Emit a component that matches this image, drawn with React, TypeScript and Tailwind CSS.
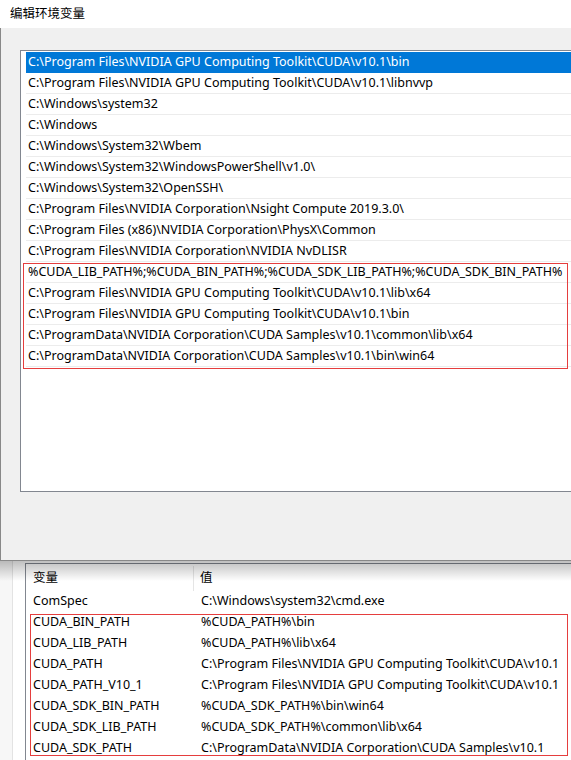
import React from 'react';

const paths: string[] = [
  'C:\\Program Files\\NVIDIA GPU Computing Toolkit\\CUDA\\v10.1\\bin',
  'C:\\Program Files\\NVIDIA GPU Computing Toolkit\\CUDA\\v10.1\\libnvvp',
  'C:\\Windows\\system32',
  'C:\\Windows',
  'C:\\Windows\\System32\\Wbem',
  'C:\\Windows\\System32\\WindowsPowerShell\\v1.0\\',
  'C:\\Windows\\System32\\OpenSSH\\',
  'C:\\Program Files\\NVIDIA Corporation\\Nsight Compute 2019.3.0\\',
  'C:\\Program Files (x86)\\NVIDIA Corporation\\PhysX\\Common',
  'C:\\Program Files\\NVIDIA Corporation\\NVIDIA NvDLISR',
  '%CUDA_LIB_PATH%;%CUDA_BIN_PATH%;%CUDA_SDK_LIB_PATH%;%CUDA_SDK_BIN_PATH%',
  'C:\\Program Files\\NVIDIA GPU Computing Toolkit\\CUDA\\v10.1\\lib\\x64',
  'C:\\Program Files\\NVIDIA GPU Computing Toolkit\\CUDA\\v10.1\\bin',
  'C:\\ProgramData\\NVIDIA Corporation\\CUDA Samples\\v10.1\\common\\lib\\x64',
  'C:\\ProgramData\\NVIDIA Corporation\\CUDA Samples\\v10.1\\bin\\win64',
];

const vars: [string, string][] = [
  ['ComSpec', 'C:\\Windows\\system32\\cmd.exe'],
  ['CUDA_BIN_PATH', '%CUDA_PATH%\\bin'],
  ['CUDA_LIB_PATH', '%CUDA_PATH%\\lib\\x64'],
  ['CUDA_PATH', 'C:\\Program Files\\NVIDIA GPU Computing Toolkit\\CUDA\\v10.1'],
  ['CUDA_PATH_V10_1', 'C:\\Program Files\\NVIDIA GPU Computing Toolkit\\CUDA\\v10.1'],
  ['CUDA_SDK_BIN_PATH', '%CUDA_SDK_PATH%\\bin\\win64'],
  ['CUDA_SDK_LIB_PATH', '%CUDA_SDK_PATH%\\common\\lib\\x64'],
  ['CUDA_SDK_PATH', 'C:\\ProgramData\\NVIDIA Corporation\\CUDA Samples\\v10.1'],
];

export default function App() {
  return (
    <div className="relative w-[571px] h-[760px] overflow-hidden bg-white text-black text-[12.5px] font-['Noto_Sans','Noto_Sans_CJK_SC',sans-serif]">
      {/* edit dialog */}
      <div className="h-[561px] flex flex-col">
        <div className="h-[28px] bg-white pl-[10px] flex items-center leading-none text-[12.5px]">编辑环境变量</div>
        <div className="flex-1 bg-[#f0f0f0] border-l border-b border-[#888888] pt-[22px] pl-[19px]">
          <div className="relative w-[600px] h-[442px] bg-white border border-[#828790] pt-[1px] pl-[5px]">
            {paths.map((p, i) => (
              <div
                key={i}
                className={
                  i === 0
                    ? 'h-[21px] flex items-center pl-[2px] whitespace-nowrap bg-[#0078d7] text-white'
                    : 'h-[21px] flex items-center pl-[2px] whitespace-nowrap border-b border-[#ececec]'
                }
              >
                {p}
              </div>
            ))}
            <div className="absolute left-[2px] top-[212px] w-[545px] h-[106px] border border-[#e53e3e] pointer-events-none" />
          </div>
        </div>
      </div>

      {/* window behind */}
      <div className="flex h-[199px]">
        <div className="w-[13px] bg-[#f7f7f7] border-r border-[#e3e3e3]" />
        <div className="flex-1 pt-[2px] pl-[12px]">
          <div className="relative h-[220px] border-l border-t border-[#828790] bg-white pt-[2px]">
            <div className="h-[25px] flex">
              <div className="w-[168px] pl-[7px] flex items-center border-r border-[#e5e5e5]">变量</div>
              <div className="pl-[6px] flex items-center">值</div>
            </div>
            {vars.map(([k, v], i) => (
              <div key={i} className="h-[21px] flex items-center whitespace-nowrap">
                <div className="w-[168px] pl-[7px]">{k}</div>
                <div className="pl-[7px]">{v}</div>
              </div>
            ))}
            <div className="absolute left-[4px] top-[50px] w-[538px] h-[142px] border border-[#e53e3e] pointer-events-none" />
          </div>
        </div>
      </div>

      {/* dialog shadow */}
      <div className="absolute left-0 top-[561px] w-full h-[20px] bg-gradient-to-b from-[#00000040] to-transparent pointer-events-none" />
    </div>
  );
}
